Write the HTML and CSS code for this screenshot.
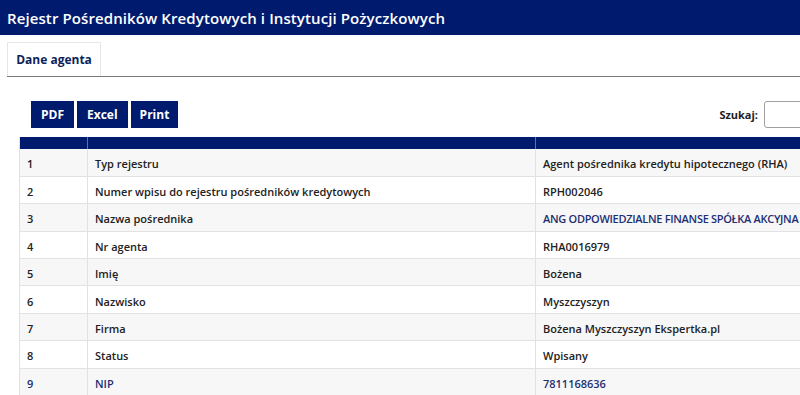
FILE: index.html
```html
<!DOCTYPE html>
<html lang="pl">
<head>
    <meta charset="UTF-8">
    <meta name="viewport" content="width=device-width, initial-scale=1.0">
    <title>Rejestr Pośredników Kredytowych i Instytucji Pożyczkowych</title>
    <link rel="stylesheet" href="styles.css">
</head>
<body>
    <header class="top-bar">
        <h1>Rejestr Pośredników Kredytowych i Instytucji Pożyczkowych</h1>
    </header>
    <nav class="tabs">
        <a href="#" class="tab active">Dane agenta</a>
    </nav>
    <main class="content">
        <div class="toolbar">
            <div class="buttons">
                <button class="btn">PDF</button>
                <button class="btn">Excel</button>
                <button class="btn">Print</button>
            </div>
            <label class="search">Szukaj: <input type="text"></label>
        </div>
        <table class="details">
            <thead>
                <tr>
                    <th class="col-no"></th>
                    <th class="col-name"></th>
                    <th></th>
                </tr>
            </thead>
            <tbody>
                <tr><td>1</td><td>Typ rejestru</td><td>Agent pośrednika kredytu hipotecznego (RHA)</td></tr>
                <tr><td>2</td><td>Numer wpisu do rejestru pośredników kredytowych</td><td>RPH002046</td></tr>
                <tr><td>3</td><td>Nazwa pośrednika</td><td><a href="#">ANG ODPOWIEDZIALNE FINANSE SPÓŁKA AKCYJNA</a></td></tr>
                <tr><td>4</td><td>Nr agenta</td><td>RHA0016979</td></tr>
                <tr><td>5</td><td>Imię</td><td>Bożena</td></tr>
                <tr><td>6</td><td>Nazwisko</td><td>Myszczyszyn</td></tr>
                <tr><td>7</td><td>Firma</td><td>Bożena Myszczyszyn Ekspertka.pl</td></tr>
                <tr><td>8</td><td>Status</td><td>Wpisany</td></tr>
                <tr class="highlight"><td>9</td><td>NIP</td><td>7811168636</td></tr>
            </tbody>
        </table>
    </main>
</body>
</html>
```

FILE: styles.css
```css
* {
    margin: 0;
    padding: 0;
    box-sizing: border-box;
}

body {
    font-family: "Open Sans", Arial, sans-serif;
    background-color: #fff;
    color: #222;
    overflow: hidden;
}

.top-bar {
    background-color: #001a6e;
    color: #fff;
    height: 35px;
    padding: 0 7px;
    display: flex;
    align-items: center;
}

.top-bar h1 {
    font-size: 15px;
    font-weight: 600;
    letter-spacing: 0.1px;
}

.tabs {
    margin: 7px 0 0 7px;
    border-bottom: 1px solid #7a7a7a;
    display: flex;
}

.tab {
    display: block;
    width: 94px;
    height: 34px;
    line-height: 33px;
    text-align: center;
    font-size: 12px;
    font-weight: 700;
    color: #0f1f5c;
    text-decoration: none;
    border: 1px solid #e6e6e6;
    border-bottom: none;
}

.content {
    padding: 24px 0 0 19px;
}

.toolbar {
    display: flex;
    justify-content: space-between;
    align-items: center;
    padding-left: 12px;
    height: 27px;
    margin-bottom: 9px;
}

.buttons {
    display: flex;
    gap: 3px;
}

.btn {
    background-color: #001a6e;
    color: #fff;
    border: none;
    font-family: inherit;
    font-size: 12px;
    font-weight: 700;
    height: 27px;
    padding: 0 10px;
    cursor: pointer;
}

.btn:last-child {
    padding: 0 9px;
}

.search {
    font-size: 11px;
    font-weight: 700;
    display: flex;
    align-items: center;
    gap: 6px;
    margin-right: -40px;
}

.search input {
    width: 76px;
    height: 27px;
    border: 1px solid #a0a0a0;
    border-radius: 3px;
}

.details {
    width: 840px;
    border-collapse: collapse;
    font-size: 11px;
    font-weight: 600;
    border-left: 1px solid #e2e2e2;
}

.details thead {
    background-color: #001a6e;
}

.details th {
    height: 12px;
    border-right: 1px solid #6070a0;
}

.details .col-no {
    width: 68px;
}

.details .col-name {
    width: 448px;
}

.details td {
    height: 27.4px;
    padding: 3px 7px 0;
    border-right: 1px solid #e2e2e2;
    border-bottom: 1px solid #e2e2e2;
}

.details tbody tr:nth-child(odd) {
    background-color: #f7f7f7;
}

.details a {
    color: #1d2f73;
    text-decoration: none;
    letter-spacing: -0.3px;
}

.details tr.highlight td {
    color: #1d2f73;
}
```
